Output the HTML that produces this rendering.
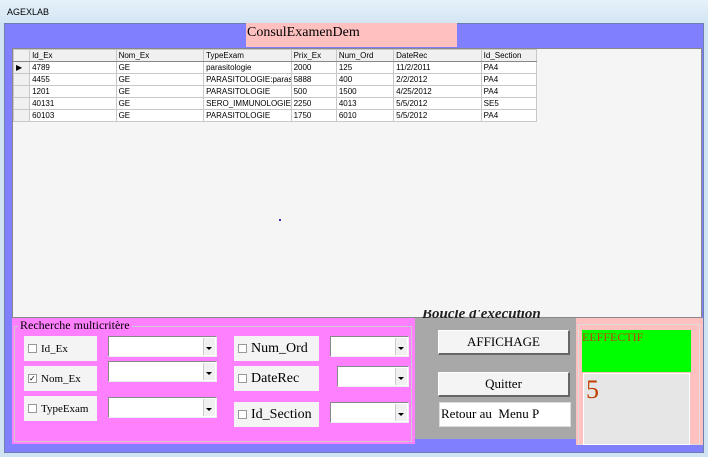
<!DOCTYPE html>
<html><head><meta charset="utf-8"><style>
*{margin:0;padding:0;box-sizing:border-box}
body{width:708px;height:457px;overflow:hidden;background:#cfe3f2;position:relative;font-family:"Liberation Sans",sans-serif}
.a{position:absolute}
.s{font-family:"Liberation Serif",serif}
.grid{left:12px;top:48px;width:690px;height:270px;background:#f5f5f5;border:1px solid #888}
table{border-collapse:collapse;font-size:8px;position:absolute;left:0;top:0;table-layout:fixed}
td{border:1px solid #c8c8c8;height:12px;padding:0 2px;white-space:nowrap;overflow:hidden;background:#fff;line-height:10px}
tr.h td{background:#f0f0f0;border-bottom:1px solid #888}
td.rh{background:#f0f0f0}
.lab{background:#f4f4f4;font-size:12px;display:flex;align-items:center;padding-left:4px}
.cb{width:9px;height:9px;border:1px solid #999;background:#fff;margin-right:4px;font-size:8px;line-height:7px}
.combo{background:#fff;border:1px solid #888;border-right-color:#eee;border-bottom-color:#eee}
.combo:after{content:"";position:absolute;right:1px;top:1px;bottom:1px;width:11px;background:#f0f0f0;border-left:1px solid #ccc}
.combo i{position:absolute;right:4px;top:50%;border:3px solid transparent;border-top:3px solid #000;border-bottom:0;z-index:2}
.btn{background:#f4f4f4;border:1px solid #fff;border-right:2px solid #666;border-bottom:2px solid #666;font-size:13px;text-align:center}
</style></head><body>
<div class="a" style="left:0;top:0;width:708px;height:23px;background:linear-gradient(#e6f1fa,#d3e6f4)"></div>
<div class="a" style="left:7px;top:7px;font-size:9px;color:#000">AGEXLAB</div>
<div class="a" style="left:4px;top:23px;width:700px;height:430px;background:#8080ff;border:1px solid #6b7fb0"></div>
<div class="a s" style="left:246px;top:23px;width:211px;height:24px;background:#ffc0c0;font-size:14px;padding:2px 0 0 1px">ConsulExamenDem</div>
<div class="a grid">
<table style="width:524px">
<colgroup><col style="width:16px"><col style="width:86px"><col style="width:87px"><col style="width:87px"><col style="width:45px"><col style="width:57px"><col style="width:87px"><col style="width:55px"></colgroup>
<tr class="h"><td class="rh"></td><td>Id_Ex</td><td>Nom_Ex</td><td>TypeExam</td><td>Prix_Ex</td><td>Num_Ord</td><td>DateRec</td><td>Id_Section</td></tr>
<tr><td class="rh">▶</td><td>4789</td><td>GE</td><td>parasitologie</td><td>2000</td><td>125</td><td>11/2/2011</td><td>PA4</td></tr>
<tr><td class="rh"></td><td>4455</td><td>GE</td><td>PARASITOLOGIE:paras</td><td>5888</td><td>400</td><td>2/2/2012</td><td>PA4</td></tr>
<tr><td class="rh"></td><td>1201</td><td>GE</td><td>PARASITOLOGIE</td><td>500</td><td>1500</td><td>4/25/2012</td><td>PA4</td></tr>
<tr><td class="rh"></td><td>40131</td><td>GE</td><td>SERO_IMMUNOLOGIE</td><td>2250</td><td>4013</td><td>5/5/2012</td><td>SE5</td></tr>
<tr><td class="rh"></td><td>60103</td><td>GE</td><td>PARASITOLOGIE</td><td>1750</td><td>6010</td><td>5/5/2012</td><td>PA4</td></tr>
</table></div>
<div class="a" style="left:279px;top:219px;width:2px;height:2px;background:#33c"></div>
<div class="a" style="left:12px;top:318px;width:403px;height:126px;background:#ff80ff"></div>
<div class="a" style="left:14px;top:326px;width:398px;height:116px;border:1px solid #ccc"></div>
<div class="a s" style="left:18px;top:318px;font-size:12px;background:#ff80ff;padding:0 2px">Recherche multicritère</div>
<div class="a lab s" style="left:24px;top:336px;width:73px;height:25px;font-size:11px"><span class="cb"></span>Id_Ex</div>
<div class="a lab s" style="left:24px;top:366px;width:73px;height:25px;font-size:11px"><span class="cb">✓</span>Nom_Ex</div>
<div class="a lab s" style="left:24px;top:396px;width:73px;height:25px;font-size:11px"><span class="cb"></span>TypeExam</div>
<div class="a combo" style="left:108px;top:336px;width:109px;height:21px"><i></i></div>
<div class="a combo" style="left:108px;top:361px;width:109px;height:21px"><i></i></div>
<div class="a combo" style="left:108px;top:397px;width:109px;height:21px"><i></i></div>
<div class="a lab s" style="left:234px;top:336px;width:85px;height:25px;font-size:14px"><span class="cb"></span>Num_Ord</div>
<div class="a lab s" style="left:234px;top:366px;width:85px;height:25px;font-size:14px"><span class="cb"></span>DateRec</div>
<div class="a lab s" style="left:234px;top:402px;width:85px;height:25px;font-size:14px"><span class="cb"></span>Id_Section</div>
<div class="a combo" style="left:330px;top:336px;width:79px;height:21px"><i></i></div>
<div class="a combo" style="left:337px;top:366px;width:72px;height:21px"><i></i></div>
<div class="a combo" style="left:330px;top:402px;width:79px;height:21px"><i></i></div>
<div class="a" style="left:415px;top:318px;width:161px;height:121px;background:#a8a8a8"></div>
<div class="a s" style="left:422px;top:310px;width:150px;height:8px;overflow:hidden;font-size:15px;font-style:italic;font-weight:bold;line-height:12px;color:#222"><span style="position:relative;top:-2px">Boucle d'exécution</span></div>
<div class="a btn s" style="left:438px;top:330px;width:132px;height:25px;line-height:22px">AFFICHAGE</div>
<div class="a btn s" style="left:438px;top:372px;width:132px;height:25px;line-height:22px">Quitter</div>
<div class="a s" style="left:439px;top:402px;width:132px;height:25px;background:#fff;border:1px solid #ddd;font-size:13px;padding:3px 0 0 1px">Retour au&nbsp; Menu P</div>
<div class="a" style="left:576px;top:318px;width:127px;height:127px;background:#ffc0c0"></div>
<div class="a" style="left:578px;top:324px;width:122px;height:121px;border:1px solid #ddd"></div>
<div class="a s" style="left:582px;top:330px;width:109px;height:42px;background:#00ff00;color:#c04000;font-size:12px">EEFFECTIF</div>
<div class="a s" style="left:583px;top:373px;width:107px;height:72px;background:#e6e6e6;border:1px solid #fff;color:#c04000;font-size:26px;padding-left:2px;line-height:32px">5</div>
</body></html>
